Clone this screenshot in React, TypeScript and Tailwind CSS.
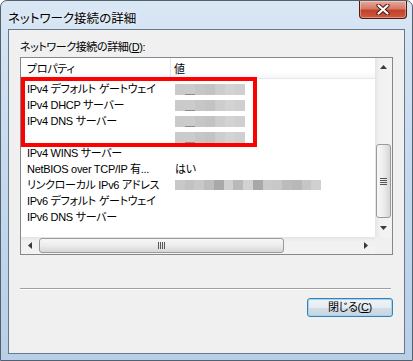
const jp = "font-['Liberation_Sans','Noto_Sans_CJK_JP',sans-serif] [font-feature-settings:'palt']";

const blurA = ["bg-[#cacaca]", "bg-[#cbcbcb]", "bg-[#c6c6c6]", "bg-[#c3c3c3]", "bg-[#cdcdcd]", "bg-[#d3d3d3]", "bg-[#cfcfcf]"];
const blurLong = [
  "bg-[#c8c8c8]", "bg-[#c2c2c2]", "bg-[#c8c8c8]", "bg-[#bdbdbd]", "bg-[#a9a9a9]",
  "bg-[#d0d0d0]", "bg-[#b9b9b9]", "bg-[#d2d2d2]", "bg-[#a8a8a8]", "bg-[#cacaca]",
  "bg-[#c8c8c8]", "bg-[#bcbcbc]", "bg-[#b8b8b8]", "bg-[#c6c6c6]", "bg-[#d0d0d0]",
];

type Row = { name: string; value?: "blur" | "long" | string };

const rows: Row[] = [
  { name: "IPv4 デフォルト ゲートウェイ", value: "blur" },
  { name: "IPv4 DHCP サーバー", value: "blur" },
  { name: "IPv4 DNS サーバー", value: "blur" },
  { name: "", value: "blur" },
  { name: "IPv4 WINS サーバー" },
  { name: "NetBIOS over TCP/IP 有...", value: "はい" },
  { name: "リンクローカル IPv6 アドレス", value: "long" },
  { name: "IPv6 デフォルト ゲートウェイ" },
  { name: "IPv6 DNS サーバー" },
];

const Blur = () => (
  <div className="flex h-[11px] w-[70px]">
    {blurA.map((c, i) => (
      <div key={i} className={`h-full w-[10px] ${c} ${i === 1 ? "border-b border-[#8c8c8c]" : ""}`} />
    ))}
  </div>
);

const BlurLong = () => (
  <div className="flex h-[10px] w-[146px]">
    {blurLong.map((c, i) => (
      <div key={i} className={`h-full w-[10px] ${c}`} />
    ))}
  </div>
);

const Tri = ({ dir }: { dir: "up" | "down" | "left" | "right" }) => {
  const pts = {
    up: "0,4 3.5,0 7,4",
    down: "0,0 7,0 3.5,4",
    left: "4,0 4,7 0,3.5",
    right: "0,0 0,7 4,3.5",
  }[dir];
  const vertical = dir === "up" || dir === "down";
  return (
    <svg width={vertical ? 7 : 4} height={vertical ? 4 : 7} viewBox={vertical ? "0 0 7 4" : "0 0 4 7"}>
      <polygon points={pts} fill="#3a3a3a" />
    </svg>
  );
};

const App = () => {
  return (
    <div className="h-[361px] w-[413px] bg-white">
      <div className="flex h-full w-full flex-col rounded-t-[7px] border border-[#53606e] bg-[linear-gradient(180deg,#d9e6f4_0%,#c6d9ee_45%,#b9cfe8_100%)]">
        {/* title bar */}
        <div className="flex h-[28px] items-start">
          <div className={`${jp} pl-[7px] pt-[10px] text-[12.5px] leading-[16px] text-black [text-shadow:0_0_6px_#ffffff]`}>
            ネットワーク接続の詳細
          </div>
          <div className="ml-auto mr-[5px] flex h-[18px] w-[48px] items-center justify-center rounded-b-[4px] border border-t-0 border-[#4a1c16] bg-[linear-gradient(180deg,#e9a99b_0%,#d47a66_45%,#c2412b_55%,#cf5a3f_100%)] shadow-[inset_0_0_0_1px_rgba(255,255,255,0.35)]">
            <svg width="14" height="11" viewBox="0 0 14 11">
              <path d="M2.5 1.5 L11.5 9.5 M11.5 1.5 L2.5 9.5" stroke="#4b1d15" strokeWidth="4.2" strokeLinecap="round" />
              <path d="M2.5 1.5 L11.5 9.5 M11.5 1.5 L2.5 9.5" stroke="#ffffff" strokeWidth="2.2" strokeLinecap="round" />
            </svg>
          </div>
        </div>

        {/* client area */}
        <div className="mx-[7px] mb-[6px] flex flex-1 flex-col border border-[#66788c] bg-[#f0f0f0]">
          <div className={`${jp} ml-[11px] mt-[10px] mb-[3px] h-[14px] text-[11px] leading-[14px] tracking-[-0.4px] text-black`}>
            ネットワーク接続の詳細(<span className="underline underline-offset-1">D</span>):
          </div>

          {/* list view */}
          <div className="relative mx-[11px] h-[198px] border border-[#828790] bg-white">
            <div className="grid h-full grid-cols-[1fr_17px] grid-rows-[1fr_17px]">
              <div className={`${jp} overflow-hidden text-[11px] tracking-[-0.3px] text-black`}>
                <div className="flex h-[21px] border-b border-[#e6e8eb] bg-[linear-gradient(180deg,#ffffff_0%,#ffffff_70%,#f4f6f9_100%)]">
                  <div className="flex w-[150px] items-center border-r border-[#e3e5e8] pl-[6px] pt-[3px]">プロパティ</div>
                  <div className="flex items-center pl-[3px] pt-[3px]">値</div>
                </div>
                <div className="pt-[2px]">
                  {rows.map((r, i) => (
                    <div key={i} className="flex h-[16px] items-center">
                      <div className="w-[150px] whitespace-nowrap pl-[6px] leading-[16px]">{r.name}</div>
                      <div className="flex items-center pl-[4px] leading-[16px]">
                        {r.value === "blur" ? <Blur /> : r.value === "long" ? <BlurLong /> : r.value}
                      </div>
                    </div>
                  ))}
                </div>
              </div>

              {/* vertical scrollbar */}
              <div className="flex flex-col bg-[linear-gradient(90deg,#e4e4e4_0%,#f1f1f1_25%,#f3f3f3_100%)]">
                <div className="flex h-[17px] items-center justify-center">
                  <Tri dir="up" />
                </div>
                <div className="h-[69px]" />
                <div className="mx-[1px] flex h-[74px] items-center justify-center rounded-[3px] border border-[#9a9a9a] bg-[linear-gradient(90deg,#f7f7f7_0%,#ececec_50%,#d6d6d6_100%)]">
                  <div className="flex flex-col gap-[1px]">
                    <div className="h-[1px] w-[7px] bg-[#555]" />
                    <div className="h-[1px] w-[7px] bg-[#555]" />
                    <div className="h-[1px] w-[7px] bg-[#555]" />
                    <div className="h-[1px] w-[7px] bg-[#555]" />
                  </div>
                </div>
                <div className="flex flex-1 items-center justify-center">
                  <Tri dir="down" />
                </div>
              </div>

              {/* horizontal scrollbar */}
              <div className="flex bg-[linear-gradient(180deg,#e4e4e4_0%,#f1f1f1_25%,#f3f3f3_100%)]">
                <div className="flex w-[17px] items-center justify-center">
                  <Tri dir="left" />
                </div>
                <div className="w-[1px]" />
                <div className="my-[1px] flex w-[245px] items-center justify-center rounded-[3px] border border-[#9a9a9a] bg-[linear-gradient(180deg,#f7f7f7_0%,#ececec_50%,#d6d6d6_100%)]">
                  <div className="flex gap-[1px]">
                    <div className="h-[7px] w-[1px] bg-[#555]" />
                    <div className="h-[7px] w-[1px] bg-[#555]" />
                    <div className="h-[7px] w-[1px] bg-[#555]" />
                    <div className="h-[7px] w-[1px] bg-[#555]" />
                  </div>
                </div>
                <div className="flex flex-1 items-center justify-end pr-[7px]">
                  <Tri dir="right" />
                </div>
              </div>
              <div className="bg-[#f0f0f0]" />
            </div>

            {/* highlight annotation */}
            <div className="pointer-events-none absolute left-0 top-[19px] h-[70px] w-[236px] border-4 border-[#ff0000]" />
          </div>

          {/* separator */}
          <div className="ml-[11px] mr-[13px] mt-[33px] border-t border-b border-t-[#a0a0a0] border-b-white" />

          {/* button row */}
          <div className="mt-[8px] flex justify-end pr-[11px]">
            <button className={`${jp} flex h-[19px] w-[86px] items-center justify-center rounded-[3px] border border-[#3c7fb1] bg-[linear-gradient(180deg,#eef3f7_0%,#e6ecf1_50%,#d3dde6_51%,#c9d5e0_100%)] text-[11px] tracking-[-0.3px] text-black shadow-[inset_0_0_0_1px_#9cd6f5]`}>
              閉じる(<span className="underline underline-offset-1">C</span>)
            </button>
          </div>
        </div>
      </div>
    </div>
  );
};

export default App;
